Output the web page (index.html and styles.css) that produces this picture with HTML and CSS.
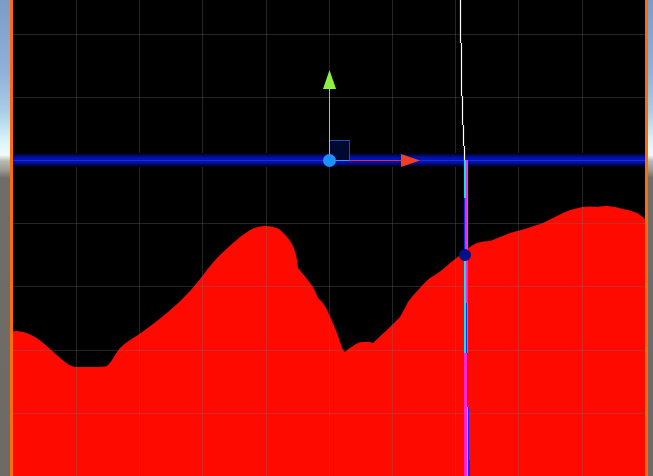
FILE: index.html
```html
<!DOCTYPE html>
<html lang="en">
<head>
    <meta charset="UTF-8">
    <title>Curve</title>
    <link rel="stylesheet" href="styles.css">
</head>
<body>
<div id="scene">
    <div class="sky sky-left"></div>
    <svg id="view" width="632" height="476" viewBox="13 0 632 476" xmlns="http://www.w3.org/2000/svg">
        <defs>
            <linearGradient id="band" x1="0" y1="0" x2="0" y2="1">
                <stop offset="0" stop-color="#000000"/>
                <stop offset="0.15" stop-color="#000650"/>
                <stop offset="0.32" stop-color="#0010a8"/>
                <stop offset="0.5" stop-color="#0014bc"/>
                <stop offset="0.68" stop-color="#0010a8"/>
                <stop offset="0.85" stop-color="#000650"/>
                <stop offset="1" stop-color="#000000"/>
            </linearGradient>
        </defs>
        <rect x="13" y="0" width="632" height="476" fill="#000000"/>

        <!-- curve -->
        <path fill="#ff0a00" d="M13 331.5 L16 331 Q20 331 25 332.5 Q30 334 35 337 Q40 340 45 344.5 Q50 349 55 353.5 Q60 358 65 362 Q70 366.5 76 367 L97 367 L105 366.5 Q108 366 112 360 Q116 353 120 348 Q126 342 138 335 Q155 323 168 312 Q180 302 190 291 Q196 284 200 279 Q208 268 217 258 Q225 250 233 243 Q242 235 250 230 Q258 226 265 226 Q273 226 279 229 Q288 237 292 244 Q297 254 298 268 Q305 276 313 287 Q316 293 318 298 Q324 303 328 312 Q333 323 337 333 Q340 342 343 350 L345 352 Q349 348 353 346 Q358 342 363 342 Q368 341 373 343 Q380 336 387 330 Q394 323 400 317 Q405 308 408 302 Q413 295 420 288 Q426 281 430 278 Q437 274 442 270 Q452 261 463 253 Q470 246 477 243 Q483 241 490 241 Q500 237 510 233 Q526 229 543 223 Q553 218 563 213 Q572 209 582 207 Q590 206 597 207 Q602 206 607 206 Q615 206.5 623 209 Q630 210 637 213 Q642 216 645 219 V476 H13 Z"/>

        <!-- grid -->
        <g stroke="#707070" stroke-opacity="0.33" stroke-width="1">
            <path d="M76.5 0V476M139.5 0V476M202.5 0V476M266.5 0V476M329.5 0V476M392.5 0V476M455.5 0V476M518.5 0V476M582.5 0V476"/>
            <path d="M13 34.5H645M13 97.5H645M13 223.5H645M13 286.5H645M13 350.5H645M13 413.5H645"/>
        </g>

        <!-- horizontal band -->
        <rect x="13" y="153" width="632" height="14" fill="url(#band)"/>
        <rect x="13" y="160" width="632" height="1" fill="#1a2ed0"/>

        <!-- white line -->
        <path d="M460.5 0V43M461.5 43V96M462.5 96V125M463.5 125V146M464.5 146V160" stroke="#ffffff" stroke-width="1.2" fill="none"/>

        <!-- stripes, top to bottom -->
        <rect x="464" y="160" width="2" height="38" fill="#00e8f0"/>
        <rect x="466" y="160" width="1" height="38" fill="#ff20e0"/>
        <rect x="467" y="160" width="1" height="38" fill="#18c080"/>

        <rect x="464" y="198" width="1" height="57" fill="#0a2cff"/>
        <rect x="465" y="198" width="2" height="57" fill="#ff20e0"/>
        <rect x="467" y="198" width="1" height="57" fill="#18c080"/>

        <rect x="464" y="255" width="2" height="48" fill="#00e8f0"/>
        <rect x="466" y="255" width="2" height="48" fill="#ff20e0"/>

        <rect x="464" y="303" width="2" height="50" fill="#00e8f0"/>
        <rect x="466" y="303" width="1" height="50" fill="#0a2cff"/>
        <rect x="467" y="303" width="1" height="50" fill="#18c080"/>

        <rect x="464" y="353" width="3" height="123" fill="#ff20e0"/>
        <rect x="467" y="353" width="1" height="54" fill="#0a2cff"/>
        <rect x="467" y="407" width="1" height="69" fill="#00e8f0"/>
        <rect x="468" y="407" width="1" height="69" fill="#0a2cff"/>
        <rect x="469" y="460" width="1" height="16" fill="#0a2cff"/>

        <!-- gizmo -->
        <rect x="329.5" y="140.5" width="20" height="20" fill="#000a30" stroke="#1a50b4"/>
        <path d="M329.5 85V160" stroke="#94d850" stroke-width="1"/>
        <polygon points="329.5,70 336,89 323,89" fill="#8cf040"/>
        <path d="M336 160.5H349" stroke="#4a90f0" stroke-width="1"/>
        <path d="M349 160.5H405" stroke="#e83020" stroke-width="1"/>
        <polygon points="401,154 420,160.5 401,167" fill="#f04020"/>
        <circle cx="329.5" cy="160.5" r="6.5" fill="#2090ff"/>

        <!-- point on the curve -->
        <circle cx="465" cy="255" r="6" fill="#001088"/>
    </svg>
    <div class="sky sky-right"></div>
</div>
</body>
</html>
```

FILE: styles.css
```css
*{
    margin: 0;
    padding: 0;
}
body{
    background: #000;
    overflow: hidden;
}
#scene{
    display: flex;
    width: 653px;
    height: 476px;
}
#view{
    display: block;
    flex: none;
}
.sky{
    flex: none;
    height: 476px;
    background: linear-gradient(to bottom, #7b9cc8 0, #8fb0d8 70px, #a8cce8 110px, #d8f4fa 140px, #f2fbfb 155px, #b8bab0 161px, #9a9a92 170px, #706c68 178px, #6e6a66 476px);
}
.sky-left{
    width: 10px;
    border-right: 3px solid #ff6a0a;
}
.sky-right{
    width: 5px;
    border-left: 3px solid #ff6a0a;
}
```
